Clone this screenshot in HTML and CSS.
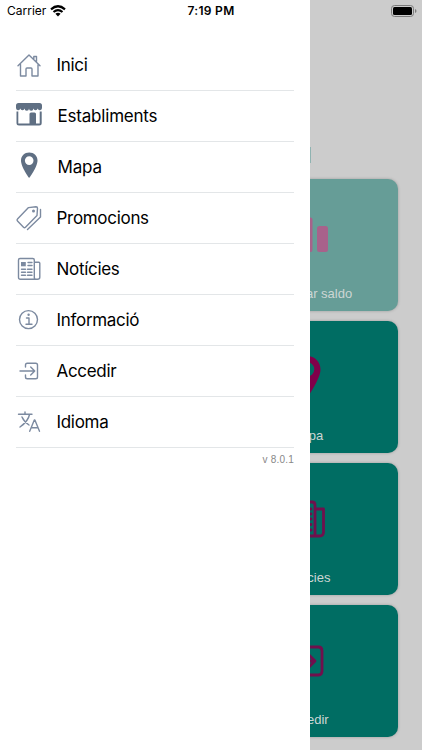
FILE: index.html
```html
<!DOCTYPE html>
<html lang="ca">
<head>
  <meta charset="UTF-8" />
  <meta name="viewport" content="width=device-width, initial-scale=1.0"/>
  <title>Menú</title>
  <link rel="stylesheet" href="styles.css">
</head>
<body>
  <main class="home">
    <div class="logo-edge"></div>
    <div class="cards">
      <div class="card disabled">
        <svg class="card-icon" viewBox="0 0 44 44"><rect x="2" y="17" width="11" height="20" rx="2"/><rect x="16.500" y="2.500" width="11" height="34.500" rx="2"/><rect x="32" y="11" width="11" height="26" rx="2.500"/></svg>
        <span>Consultar saldo</span>
      </div>
      <div class="card">
        <svg class="card-icon" viewBox="0 0 44 44"><path fill-rule="evenodd" d="M22-1C14-1 8 5 8 12.500C8 22 22 41 22 41S35.500 22 35.500 12.500C35.500 5 30-1 22-1ZM22 5a7.300 7.300 0 1 1 0 14.600a7.300 7.300 0 0 1 0-14.600Z"/></svg>
        <span>Mapa</span>
      </div>
      <div class="card">
        <svg class="card-icon line" viewBox="0 0 44 44"><path d="M31 37H6q-3 0-3-3V6q0-3 3-3h21q3 0 3 3v31h4.500q4 0 4-4V10H30M10 11h6v6h-6zM20 10h6M20 15h6M9 20h17M9 25.500h17M9 31h17"/></svg>
        <span>Notícies</span>
      </div>
      <div class="card">
        <svg class="card-icon line" viewBox="0 0 44 44"><path d="M12 13V10q0-4 4-4h17.500q3.500 0 3.500 4v20q0 4-3.500 4H16q-4 0-4-4v-3M2 20h28M23 13l7 7-7 7"/></svg>
        <span>Accedir</span>
      </div>
    </div>
  </main>

  <nav class="drawer">
    <ul class="menu">
      <li>
        <svg class="icon" viewBox="0 0 26 26"><path d="M2 13.800 13 3l11 10.800M4.500 12.500V24H10v-7q0-1 1-1h4q1 0 1 1v7h6V12.500M17.800 7V4.500h2.700v5"/></svg>
        <span>Inici</span>
      </li>
      <li>
        <svg class="icon solid" viewBox="0 0 26 26"><path d="M2.500 0h21q2.500 0 2.500 2.500V5a2.200 2.200 0 0 1-4.300.6 2.200 2.200 0 0 1-4.300 0 2.200 2.200 0 0 1-4.400 0 2.200 2.200 0 0 1-4.400 0 2.200 2.200 0 0 1-4.300 0A2.200 2.200 0 0 1 0 5V2.500Q0 0 2.500 0Z"/><path d="M.5 8.500h1.800V20.500H13.500V11q0-1.500 1.500-1.500h3.500q1.500 0 1.500 1.500v9.500h3.700v-12h2V20q0 2.500-2.500 2.500H3Q.5 22.500.5 20Z"/></svg>
        <span class="shift">Establiments</span>
      </li>
      <li>
        <svg class="icon solid" viewBox="0 0 26 26"><path fill-rule="evenodd" d="M13.200-1.500C8.500-1.500 5 2 5 6.500C5 13 13.200 24 13.200 24S21.500 13 21.500 6.500C21.500 2 18-1.500 13.200-1.500ZM13.200 2.300a4.300 4.300 0 1 1 0 8.600a4.300 4.300 0 0 1 0-8.600Z"/></svg>
        <span class="shift">Mapa</span>
      </li>
      <li>
        <svg class="icon" viewBox="0 0 26 26"><path d="m1.500 14 11-11.400L20 1.800q1.500 0 1.500 1.500l-.5 7.200L9.500 22.200q-1 1-2 0L1.500 16q-1-1 0-2ZM24.500 4.500V12L11.500 24.500"/><circle class="dot" cx="17.500" cy="6" r="1.500"/></svg>
        <span>Promocions</span>
      </li>
      <li>
        <svg class="icon" viewBox="0 0 26 26"><path d="M18.500 23.300H4.500q-2 0-2-2V4q0-1.500 1.500-1.500h12.800q1.500 0 1.500 1.500v17.300q0 2 1.500 2h1.700q2.300 0 2.300-2V7.200q0-1-1-1h-4.300M12 6.500h4M12 9.500h4M5.500 13.300h4M11.500 13.300H16M5.500 16.300h4M11.500 16.300H16M5.500 19.300h4M11.500 19.300H16"/><path class="dot" d="M5 6h4.800v4.300H5z"/></svg>
        <span>Notícies</span>
      </li>
      <li>
        <svg class="icon" viewBox="0 0 26 26"><circle cx="12.500" cy="12.600" r="9"/><path d="M10.500 11h2.500v6M10 17.200h6"/><circle class="dot" cx="12.600" cy="7.800" r="1.200"/></svg>
        <span>Informació</span>
      </li>
      <li>
        <svg class="icon" viewBox="0 0 26 26"><path d="M9.500 9V7q0-1.800 1.800-1.800h8.400q1.800 0 1.800 1.800v12q0 1.800-1.800 1.800h-8.400q-1.800 0-1.800-1.800v-2M4 13h14.500M14.700 9l4 4-4 4"/></svg>
        <span>Accedir</span>
      </li>
      <li>
        <svg class="icon" viewBox="0 0 26 26"><path d="M2.500 5.300H16M9 3v2.300M6 8c1.500 3.500 4 6 7 8M13.500 5.500C12.500 11 9 14.500 4 18M13.700 22.300l4.600-11.300h.6l4.600 11.300M15.300 18.800h6.700"/></svg>
        <span>Idioma</span>
      </li>
    </ul>
    <div class="version">v 8.0.1</div>
  </nav>

  <header class="status">
    <div class="carrier">
      Carrier
      <svg class="wifi" viewBox="0 0 16 12"><path d="M1 4.300Q8-1.800 15 4.300M3.500 7Q8 3.200 12.500 7"/><path class="fan" d="m8 11.500-2.600-2.700Q8 6.800 10.600 8.800Z"/></svg>
    </div>
    <div class="time">7:19 PM</div>
    <svg class="battery" viewBox="0 0 26 12"><rect class="shell" x=".5" y=".5" width="22" height="11" rx="3"/><rect x="2" y="2" width="19" height="8" rx="1.500"/><path class="cap" d="M24 4q1.500.7 1.500 2T24 8Z"/></svg>
  </header>
</body>
</html>
```
FILE: styles.css
```css
* { box-sizing: border-box; }
body {
  margin: 0; height: 750px; position: relative; overflow: hidden;
  background: #ccc; font-family: Inter, "Liberation Sans", sans-serif; color: #000;
}

/* status bar */
.status {
  position: absolute; top: 0; left: 0; width: 100%; height: 21px;
  display: grid; grid-template-columns: 1fr auto 1fr; align-items: center;
  padding: 0 5px 0 7px; font-size: 12px;
}
.carrier { display: flex; align-items: center; gap: 4px; }
.wifi { width: 16px; height: 12px; fill: none; stroke: #000; stroke-width: 2.2; }
.wifi .fan { fill: #000; stroke: none; }
.time { font-weight: 600; letter-spacing: 0.3px; margin-right: 2px; }
.battery { width: 26px; height: 12px; justify-self: end; }
.battery .shell { fill: none; stroke: #7b7b7b; }
.battery .cap { fill: #7b7b7b; }

/* side menu */
.drawer {
  position: absolute; top: 0; left: 0; width: 310px; height: 100%;
  background: #fff; padding: 40px 16px 0;
}
.menu { list-style: none; margin: 0; padding: 0; }
.menu li {
  display: flex; align-items: center; gap: 14px; height: 51px;
  border-bottom: 1px solid #e3e6e8; font-size: 17px; letter-spacing: -0.3px;
}
.menu span { padding-left: 0.5px; }
.menu .shift { padding-left: 1.5px; letter-spacing: -0.2px; }
.icon {
  width: 26px; height: 26px; overflow: visible; fill: none; stroke: #7c8aa0;
  stroke-width: 1.4; stroke-linecap: round; stroke-linejoin: round;
}
.icon.solid { fill: #5f6f83; stroke: none; }
.icon .dot { fill: #7c8aa0; stroke: none; }
.version { margin-top: 5px; text-align: right; font: 10px/14px "Liberation Sans", sans-serif; letter-spacing: 0.2px; color: #888; }

/* home screen */
.home { padding: 147px 24px 0 216px; }
.logo-edge { width: 95px; height: 16px; margin-bottom: 16px; background: #8fb3b1; }
.cards { display: grid; gap: 10px; }
.card {
  height: 132px; padding: 36px 0 9px; border-radius: 10px; background: #006d63;
  display: flex; flex-direction: column; align-items: center; justify-content: space-between;
  box-shadow: 0 0 3px rgba(0,0,0,0.25);
  font: 13px/16px "Liberation Sans", sans-serif; color: #ccd6d4;
}
.card.disabled { background: #669d97; }
.card-icon { width: 44px; height: 44px; overflow: visible; fill: #80004a; }
.card-icon.line { fill: none; stroke: #70104d; stroke-width: 2.8; stroke-linecap: round; stroke-linejoin: round; }
.disabled .card-icon { fill: #a8628b; }
```
